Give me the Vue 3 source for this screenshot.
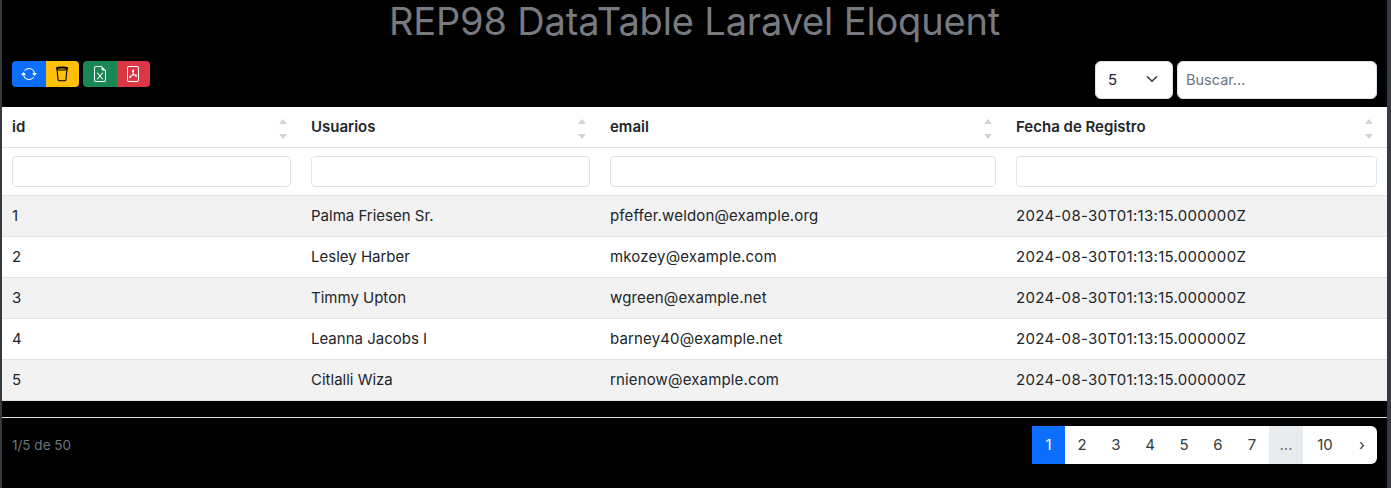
<script setup>
const columns = [
  { key: 'id', label: 'id' },
  { key: 'name', label: 'Usuarios' },
  { key: 'email', label: 'email' },
  { key: 'created', label: 'Fecha de Registro' },
]

const fecha = '2024-08-30T01:13:15.000000Z'
const rows = [
  { id: 1, name: 'Palma Friesen Sr.', email: 'pfeffer.weldon@example.org', created: fecha },
  { id: 2, name: 'Lesley Harber', email: 'mkozey@example.com', created: fecha },
  { id: 3, name: 'Timmy Upton', email: 'wgreen@example.net', created: fecha },
  { id: 4, name: 'Leanna Jacobs I', email: 'barney40@example.net', created: fecha },
  { id: 5, name: 'Citlalli Wiza', email: 'rnienow@example.com', created: fecha },
]

const pages = ['2', '3', '4', '5', '6', '7']
</script>

<template>
  <div class="page">
    <h1 class="title">REP98 DataTable Laravel Eloquent</h1>

    <div class="toolbar">
      <div class="actions">
        <div class="btn-group">
          <button class="btn blue" aria-label="Recargar">
            <svg width="16" height="16" viewBox="0 0 16 16" fill="currentColor">
              <path d="M11.534 7h3.932a.25.25 0 0 1 .192.41l-1.966 2.36a.25.25 0 0 1-.384 0l-1.966-2.36a.25.25 0 0 1 .192-.41m-11 2h3.932a.25.25 0 0 0 .192-.41L2.692 6.23a.25.25 0 0 0-.384 0L.342 8.59A.25.25 0 0 0 .534 9" />
              <path fill-rule="evenodd" d="M8 3c-1.552 0-2.94.707-3.857 1.818a.5.5 0 1 1-.771-.636A6.002 6.002 0 0 1 13.917 7H12.9A5 5 0 0 0 8 3M3.1 9a5.002 5.002 0 0 0 8.757 2.182.5.5 0 1 1 .771.636A6.002 6.002 0 0 1 2.083 9z" />
            </svg>
          </button>
          <button class="btn yellow" aria-label="Limpiar">
            <svg width="16" height="16" viewBox="0 0 16 16" fill="none" stroke="currentColor">
              <path stroke-width="1.1" d="M3 3.2 4.1 13.6A1.2 1.2 0 0 0 5.3 14.7h5.4a1.2 1.2 0 0 0 1.2-1.1L13 3.2" />
              <path stroke-width="2" d="M2.2 2.6C4 1.2 12 1.2 13.8 2.6" />
              <path stroke-width="1" d="M2.4 3.4C5 4.4 11 4.4 13.6 3.4" />
            </svg>
          </button>
        </div>
        <div class="btn-group">
          <button class="btn green" aria-label="Excel">
            <svg width="16" height="16" viewBox="0 0 16 16" fill="currentColor">
              <path d="M5.884 6.68a.5.5 0 1 0-.768.64L7.349 10l-2.233 2.68a.5.5 0 0 0 .768.64L8 10.781l2.116 2.54a.5.5 0 0 0 .768-.641L8.651 10l2.233-2.68a.5.5 0 0 0-.768-.64L8 9.219l-2.116-2.54z" />
              <path d="M14 14V4.5L9.5 0H4a2 2 0 0 0-2 2v12a2 2 0 0 0 2 2h8a2 2 0 0 0 2-2M9.5 3A1.5 1.5 0 0 0 11 4.5h2V14a1 1 0 0 1-1 1H4a1 1 0 0 1-1-1V2a1 1 0 0 1 1-1h5.5z" />
            </svg>
          </button>
          <button class="btn red" aria-label="PDF">
            <svg width="16" height="16" viewBox="0 0 16 16" fill="currentColor">
              <path d="M4 0a2 2 0 0 0-2 2v12a2 2 0 0 0 2 2h8a2 2 0 0 0 2-2V2a2 2 0 0 0-2-2zm0 1h8a1 1 0 0 1 1 1v12a1 1 0 0 1-1 1H4a1 1 0 0 1-1-1V2a1 1 0 0 1 1-1" />
              <path d="M4.603 12.087a.8.8 0 0 1-.438-.42c-.195-.388-.13-.776.08-1.102.198-.307.526-.568.897-.787a7.7 7.7 0 0 1 1.482-.645 20 20 0 0 0 1.062-2.227 7.3 7.3 0 0 1-.43-1.295c-.086-.4-.119-.796-.046-1.136.075-.354.274-.672.65-.823.192-.077.4-.12.602-.077a.7.7 0 0 1 .477.365c.088.164.12.356.127.538.007.187-.012.395-.047.614-.084.51-.27 1.134-.52 1.794a11 11 0 0 0 .98 1.686 5.8 5.8 0 0 1 1.334.05c.364.065.734.195.96.465.12.144.193.32.2.518.007.192-.047.382-.138.563a1.04 1.04 0 0 1-.354.416.86.86 0 0 1-.51.138c-.331-.014-.654-.196-.933-.417a5.7 5.7 0 0 1-.911-.95 11.6 11.6 0 0 0-1.997.406 11.3 11.3 0 0 1-1.021 1.51c-.29.35-.608.655-.926.787a.8.8 0 0 1-.58.029" />
            </svg>
          </button>
        </div>
      </div>

      <div class="filters">
        <div class="per-page">
          <span>5</span>
          <svg width="16" height="16" viewBox="0 0 16 16" fill="none" stroke="#343a40" stroke-width="2" stroke-linecap="round" stroke-linejoin="round">
            <path d="m2 5 6 6 6-6" />
          </svg>
        </div>
        <input class="search" type="text" placeholder="Buscar..." />
      </div>
    </div>

    <table class="grid">
      <colgroup>
        <col class="col-id" />
        <col class="col-name" />
        <col class="col-email" />
        <col class="col-date" />
      </colgroup>
      <thead>
        <tr class="head-row">
          <th v-for="col in columns" :key="col.key">
            <div class="head-cell">
              <span class="head-label">{{ col.label }}</span>
              <span class="sort">
                <i class="up"></i>
                <i class="down"></i>
              </span>
            </div>
          </th>
        </tr>
        <tr class="filter-row">
          <th v-for="col in columns" :key="col.key">
            <input class="col-filter" type="text" />
          </th>
        </tr>
      </thead>
      <tbody>
        <tr v-for="row in rows" :key="row.id">
          <td v-for="col in columns" :key="col.key" :class="'cell-' + col.key">{{ row[col.key] }}</td>
        </tr>
      </tbody>
    </table>

    <div class="footer">
      <span class="count">1/5 de 50</span>
      <nav class="pager">
        <span class="page-item active">1</span>
        <span v-for="p in pages" :key="p" class="page-item">{{ p }}</span>
        <span class="page-item dots">...</span>
        <span class="page-item wide">10</span>
        <span class="page-item next">›</span>
      </nav>
    </div>
  </div>
</template>

<style>
html,
body {
  margin: 0;
  background: #000;
}
</style>

<style scoped>
.page {
  box-sizing: border-box;
  width: 1391px;
  height: 488px;
  overflow: hidden;
  background: #000;
  border-left: 2px solid #343a40;
  border-right: 4px solid #343a40;
  font-family: Inter, "Noto Sans", sans-serif;
  font-size: 15px;
  color: #212529;
}

.title {
  margin: 0;
  height: 46px;
  line-height: 42px;
  text-align: center;
  font-size: 38px;
  font-weight: 400;
  color: #777b80;
  letter-spacing: -0.15px;
}

.toolbar {
  display: flex;
  justify-content: space-between;
  align-items: flex-start;
  height: 61px;
  padding: 15px 10px 0;
  box-sizing: border-box;
}

.actions {
  display: flex;
  gap: 4px;
}

.btn-group {
  display: flex;
}

.btn {
  width: 33.5px;
  height: 26px;
  padding: 0;
  display: flex;
  align-items: center;
  justify-content: center;
  border: none;
  color: #fff;
}

.btn-group .btn:first-child {
  border-radius: 4px 0 0 4px;
}

.btn-group .btn:last-child {
  border-radius: 0 4px 4px 0;
}

.blue {
  background: #0d6efd;
}

.yellow {
  background: #ffc107;
  color: #000;
}

.green {
  background: #198754;
}

.red {
  background: #dc3545;
}

.filters {
  display: flex;
  gap: 4px;
}

.per-page {
  box-sizing: border-box;
  width: 78px;
  height: 38px;
  display: flex;
  align-items: center;
  justify-content: space-between;
  padding: 0 14px 2px 12px;
  background: #fff;
  border: 1px solid #dee2e6;
  border-radius: 6px;
}

.per-page svg {
  width: 12px;
  height: 12px;
}

.search {
  box-sizing: border-box;
  width: 200px;
  height: 38px;
  padding: 0 8px 2px;
  background: #fff;
  border: 1px solid #dee2e6;
  border-radius: 6px;
  font: inherit;
  font-size: 14.5px;
  outline: none;
}

.search::placeholder {
  color: #6c757d;
}

.grid {
  width: 100%;
  border-collapse: collapse;
  table-layout: fixed;
  background: #fff;
}

.col-id,
.col-name {
  width: 299px;
}

.col-email {
  width: 406px;
}

.head-row th {
  height: 40px;
  padding: 0 10px;
  text-align: left;
  font-weight: 600;
  border-bottom: 1px solid #dee2e6;
}

.head-cell {
  display: flex;
  align-items: center;
  justify-content: space-between;
}

.head-label {
  margin-bottom: 2px;
}

.sort {
  display: flex;
  flex-direction: column;
  gap: 10px;
  margin: 3px 4px 0 0;
}

.sort i {
  display: block;
  width: 0;
  height: 0;
  border-left: 4px solid transparent;
  border-right: 4px solid transparent;
}

.sort .up {
  border-bottom: 5px solid #ced4da;
}

.sort .down {
  border-top: 5px solid #ced4da;
}

.filter-row th {
  height: 47px;
  padding: 0 10px;
  border-bottom: 1px solid #dee2e6;
}

.col-filter {
  display: block;
  box-sizing: border-box;
  width: 100%;
  height: 31px;
  background: #fff;
  border: 1px solid #dee2e6;
  border-radius: 4px;
  outline: none;
}

td {
  height: 41px;
  padding: 0 10px 2px;
  box-sizing: border-box;
  border-bottom: 1px solid #dee2e6;
  white-space: nowrap;
}

.cell-email {
  letter-spacing: 0.15px;
}

.cell-created {
  letter-spacing: 0.3px;
}

tbody tr:nth-child(odd) td {
  background: #f2f2f2;
}

.footer {
  display: flex;
  justify-content: space-between;
  align-items: center;
  margin-top: 16px;
  padding: 8px 10px 0;
  border-top: 1px solid #dee2e6;
}

.count {
  color: #6c757d;
  font-size: 13.5px;
}

.pager {
  display: flex;
  height: 38px;
  background: #fff;
  border-radius: 0 6px 6px 0;
  overflow: hidden;
  color: #343a40;
}

.page-item {
  display: flex;
  align-items: center;
  justify-content: center;
  width: 34px;
  padding-bottom: 2px;
  box-sizing: border-box;
}

.active {
  width: 33px;
  background: #0d6efd;
  color: #fff;
}

.dots {
  background: #e9ecef;
  color: #6c757d;
}

.wide {
  width: 44px;
}

.next {
  width: 30px;
}
</style>
